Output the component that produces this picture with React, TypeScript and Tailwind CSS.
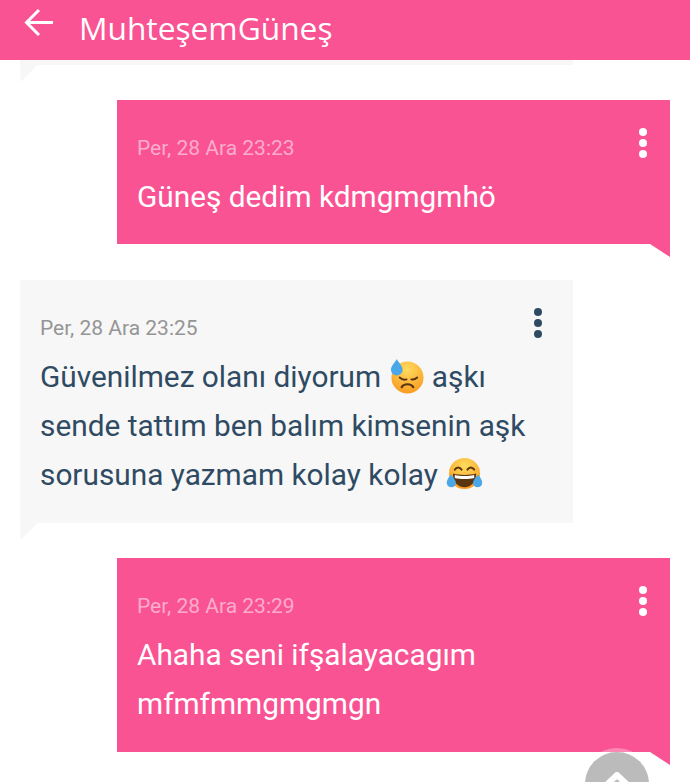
import React from 'react';

const Dots = ({ color, right }: { color: string; right: string }) => (
  <div className={`absolute ${right} top-[28px] flex flex-col gap-[3px]`}>
    <span className={`w-2 h-2 rounded-full ${color}`} />
    <span className={`w-2 h-2 rounded-full ${color}`} />
    <span className={`w-2 h-2 rounded-full ${color}`} />
  </div>
);

const SweatFace = () => (
  <svg viewBox="0 0 36 36" className="inline-block w-[35px] h-[35px] align-[-7px] ml-[1px]">
    <defs>
      <radialGradient id="sf" cx="50%" cy="25%" r="80%">
        <stop offset="0%" stopColor="#ffdb5e" />
        <stop offset="100%" stopColor="#f8981d" />
      </radialGradient>
    </defs>
    <circle cx="19" cy="19" r="16.500" fill="url(#sf)" />
    <path d="M11 19c2 2 5 2.500 7 2M23 21c2 .5 4 0 6-2" stroke="#5a3510" strokeWidth="2" fill="none" strokeLinecap="round" />
    <path d="M13 29c2-4 10-4 12 0" stroke="#5a3510" strokeWidth="2.200" fill="none" strokeLinecap="round" />
    <path d="M8 0c2 4 6 7 6 11a6 6 0 0 1-12 0c0-4 4-7 6-11z" fill="#4aa8e8" />
  </svg>
);

const JoyFace = () => (
  <svg viewBox="0 0 38 36" className="inline-block w-[37px] h-[35px] align-[-7px] ml-[1px]">
    <defs>
      <radialGradient id="jf" cx="50%" cy="25%" r="80%">
        <stop offset="0%" stopColor="#ffdb5e" />
        <stop offset="100%" stopColor="#f8981d" />
      </radialGradient>
    </defs>
    <circle cx="19" cy="17" r="16" fill="url(#jf)" />
    <path d="M9 13c2-3 5-3 7 0M22 13c2-3 5-3 7 0" stroke="#5a3510" strokeWidth="2" fill="none" strokeLinecap="round" />
    <path d="M7 17c7 2 17 2 24 0c0 9-5 14-12 14S7 26 7 17z" fill="#5a3510" />
    <path d="M9 18.500c6 1.500 14 1.500 20 0v3c-6 1.500-14 1.500-20 0z" fill="#fff" />
    <path d="M5 18c-2 3-5 6-4 10s8 4 9 0-3-7-5-10zM33 18c2 3 5 6 4 10s-8 4-9 0 3-7 5-10z" fill="#4aa8e8" />
  </svg>
);

const TailLeft = () => (
  <svg viewBox="0 0 18 18" className="absolute left-0 top-full w-[18px] h-[17px]">
    <polygon points="0,0 18,0 0,18" fill="#f7f7f7" />
  </svg>
);

const TailRight = () => (
  <svg viewBox="0 0 20 13" className="absolute right-0 top-full w-[20px] h-[13px]">
    <polygon points="0,0 20,0 20,13" fill="#f95393" />
  </svg>
);

const Sent = ({ date, children, pad }: { date: string; children: React.ReactNode; pad: string }) => (
  <div className={`relative self-end w-[553px] bg-[#f95393] px-5 pt-[34px] ${pad}`}>
    <Dots color="bg-white" right="right-[23px]" />
    <p className="text-[21px] leading-[28px] text-[#fcaccb]">{date}</p>
    <div className="mt-[10px] text-[29.800px] leading-[49px] text-white">{children}</div>
    <TailRight />
  </div>
);

export default function App() {
  return (
    <div className="w-[690px] h-[782px] bg-white overflow-hidden relative font-['Roboto',sans-serif]">
      <header className="h-[60px] bg-[#f95393] flex items-center pl-[24px] gap-[26px] text-white">
        <svg viewBox="0 0 30 30" className="w-[30px] h-[30px] -mt-[14px]" fill="none" stroke="#fff" strokeWidth="3">
          <path d="M29 14.500H3M15 2 2.500 14.500 15 27" />
        </svg>
        <h1 className="text-[31.700px] leading-none font-normal -mt-[4px] -ml-[1px] font-['Open_Sans',sans-serif]">MuhteşemGüneş</h1>
      </header>
      <main className="flex flex-col gap-[35px] px-5">
        <div className="relative self-start w-[553px] h-[5px] bg-[#f7f7f7]">
          <TailLeft />
        </div>
        <Sent date="Per, 28 Ara 23:23" pad="pb-[23px]">Güneş dedim kdmgmgmhö</Sent>
        <div className="relative self-start w-[553px] mt-[1px] bg-[#f7f7f7] px-5 pt-[34px] pb-[24px]">
          <Dots color="bg-[#2f4b63]" right="right-[31px]" />
          <p className="text-[21px] leading-[28px] text-[#959595]">Per, 28 Ara 23:25</p>
          <div className="mt-[10px] text-[29.800px] leading-[49px] text-[#2f4b63]">
            <p className="h-[49px]">Güvenilmez olanı diyorum <SweatFace /> aşkı</p>
            <p className="h-[49px]">sende tattım ben balım kimsenin aşk</p>
            <p className="h-[49px]">sorusuna yazmam kolay kolay <JoyFace /></p>
          </div>
          <TailLeft />
        </div>
        <Sent date="Per, 28 Ara 23:29" pad="pb-[24px]">
          Ahaha seni ifşalayacagım<br />mfmfmmgmgmgn
        </Sent>
      </main>
      <button className="absolute left-[581px] top-[748px] w-[72px] h-[72px] rounded-full bg-white/30 flex items-center justify-center">
        <span className="w-[64px] h-[64px] rounded-full bg-[#bbbbbb] flex justify-center pt-[20px]">
          <svg viewBox="0 0 36 20" className="w-[36px] h-[20px]">
            <path d="M2 18 18 3l16 15" stroke="#fff" strokeWidth="6" fill="none" />
          </svg>
        </span>
      </button>
    </div>
  );
}
